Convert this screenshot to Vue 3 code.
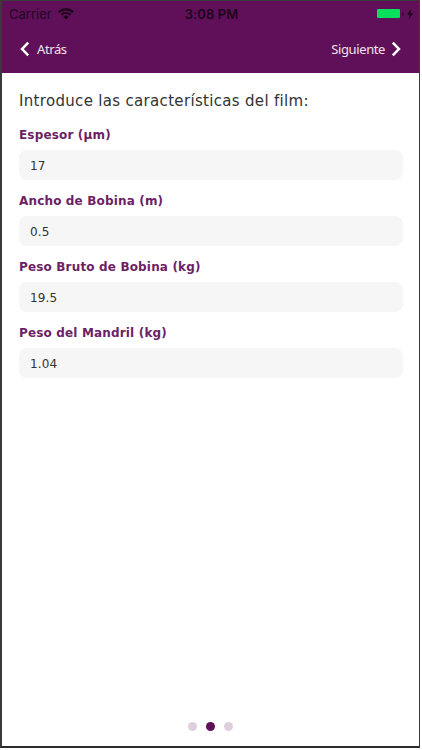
<template>
    <div class="device">
        <header class="header">
            <div class="status-bar">
                <div class="carrier">
                    <span>Carrier</span>
                    <svg class="wifi" viewBox="0 0 16 12">
                        <path d="M0.8 4.2 A10.5 10.5 0 0 1 15.2 4.2" />
                        <path d="M3.4 6.8 A6.8 6.8 0 0 1 12.6 6.8" />
                        <path class="wifi-dot" d="M5.4 8.9 A3.9 3.9 0 0 1 10.6 8.9 L8 11.6 Z" />
                    </svg>
                </div>
                <span class="time">3:08 PM</span>
                <div class="power">
                    <span class="battery"></span>
                    <span class="battery-tip"></span>
                    <svg class="bolt" viewBox="0 0 6 10">
                        <path d="M4 0 L0 5.6 H2.6 L2 10 L6 4.2 H3.4 Z" />
                    </svg>
                </div>
            </div>
            <nav class="nav">
                <button class="nav-button" type="button" @click="goBack">
                    <svg class="chevron" viewBox="0 0 10 16">
                        <path d="M8.2 1.7 L2 8 L8.2 14.3" />
                    </svg>
                    <span>Atrás</span>
                </button>
                <button class="nav-button next" type="button" @click="goNext">
                    <span>Siguiente</span>
                    <svg class="chevron" viewBox="0 0 10 16">
                        <path d="M1.8 1.7 L8 8 L1.8 14.3" />
                    </svg>
                </button>
            </nav>
        </header>

        <main class="content">
            <h1 class="title">Introduce las características del film:</h1>
            <div v-for="field in fields" :key="field.id" class="field">
                <label :for="field.id">{{ field.label }}</label>
                <input :id="field.id" v-model="field.value" type="text" />
            </div>
        </main>

        <footer class="pager">
            <span v-for="n in pages" :key="n" class="dot" :class="{ active: n === page }"></span>
        </footer>
    </div>
</template>

<script setup>
import { ref } from 'vue';

const pages = 3;
const page = ref(2);

const fields = ref([
    { id: 'espesor', label: 'Espesor (µm)', value: '17' },
    { id: 'ancho', label: 'Ancho de Bobina (m)', value: '0.5' },
    { id: 'bruto', label: 'Peso Bruto de Bobina (kg)', value: '19.5' },
    { id: 'mandril', label: 'Peso del Mandril (kg)', value: '1.04' },
]);

const goBack = () => {
    if (page.value > 1) page.value--;
};

const goNext = () => {
    if (page.value < pages) page.value++;
};
</script>

<style>
body {
    margin: 0;
    background-color: #fff;
}
</style>

<style scoped>
.device {
    box-sizing: border-box;
    width: 420px;
    height: 748px;
    border: 1px solid #3a3a3a;
    border-left-width: 2px;
    border-bottom: 2px solid #2c2a2c;
    display: flex;
    flex-direction: column;
    background-color: #fff;
    font-family: 'DejaVu Sans', Verdana, sans-serif;
}

.header {
    height: 72px;
    flex: none;
    background-color: #5f1059;
}

.status-bar {
    display: grid;
    grid-template-columns: 1fr auto 1fr;
    align-items: center;
    height: 25px;
    padding: 0 6px 0 7px;
    color: #260524;
    font-family: Inter, 'Liberation Sans', sans-serif;
    font-size: 13px;
}

.carrier {
    display: flex;
    align-items: center;
    gap: 6px;
}

.wifi {
    width: 16px;
    height: 12px;
    fill: none;
    stroke: #1d041b;
    stroke-width: 2.2;
}

.wifi .wifi-dot {
    fill: #1d041b;
    stroke: none;
}

.time {
    padding-left: 1px;
    font-weight: 600;
    letter-spacing: 0.1px;
    color: #1d041b;
}

.power {
    display: flex;
    align-items: center;
    justify-content: flex-end;
}

.battery {
    width: 23px;
    height: 9px;
    border-radius: 1px;
    background-color: #08df5c;
}

.battery-tip {
    width: 2px;
    height: 4px;
    margin: 0 3px 0 2px;
    border-radius: 0 2px 2px 0;
    background-color: #3b0937;
}

.bolt {
    width: 6px;
    height: 10px;
    fill: #1d041b;
}

.nav {
    display: flex;
    justify-content: space-between;
    align-items: center;
    height: 46px;
    padding: 0 18px;
}

.nav-button {
    display: flex;
    align-items: center;
    gap: 7px;
    padding: 0;
    border: 0;
    background: none;
    color: #f0e4ef;
    font-family: 'Noto Sans', sans-serif;
    font-size: 13px;
    letter-spacing: -0.4px;
    line-height: 18px;
    cursor: pointer;
}

.nav-button.next {
    gap: 6px;
}

.chevron {
    width: 10px;
    height: 16px;
    fill: none;
    stroke: #fff;
    stroke-width: 2.5;
}

.content {
    flex: 1;
    padding: 18px 16px 0 17px;
}

.title {
    margin: 0 0 13px;
    color: #333;
    font-size: 15px;
    font-weight: 400;
    letter-spacing: 0.32px;
    line-height: 21px;
}

.field {
    margin-bottom: 11px;
}

.field label {
    display: block;
    height: 25px;
    color: #6c1f66;
    font-size: 12px;
    font-weight: 700;
    letter-spacing: 0.16px;
    line-height: 20px;
}

.field input {
    display: block;
    box-sizing: border-box;
    width: 100%;
    height: 30px;
    padding: 1px 11px 0;
    border: 0;
    border-radius: 8px;
    outline: none;
    background-color: #f6f6f6;
    color: #333;
    font-family: inherit;
    font-size: 12px;
    letter-spacing: 0.15px;
}

.pager {
    display: flex;
    justify-content: center;
    gap: 9px;
    padding-bottom: 15px;
}

.dot {
    width: 9px;
    height: 9px;
    border-radius: 50%;
    background-color: #dfcfde;
}

.dot.active {
    background-color: #5f1059;
}
</style>
